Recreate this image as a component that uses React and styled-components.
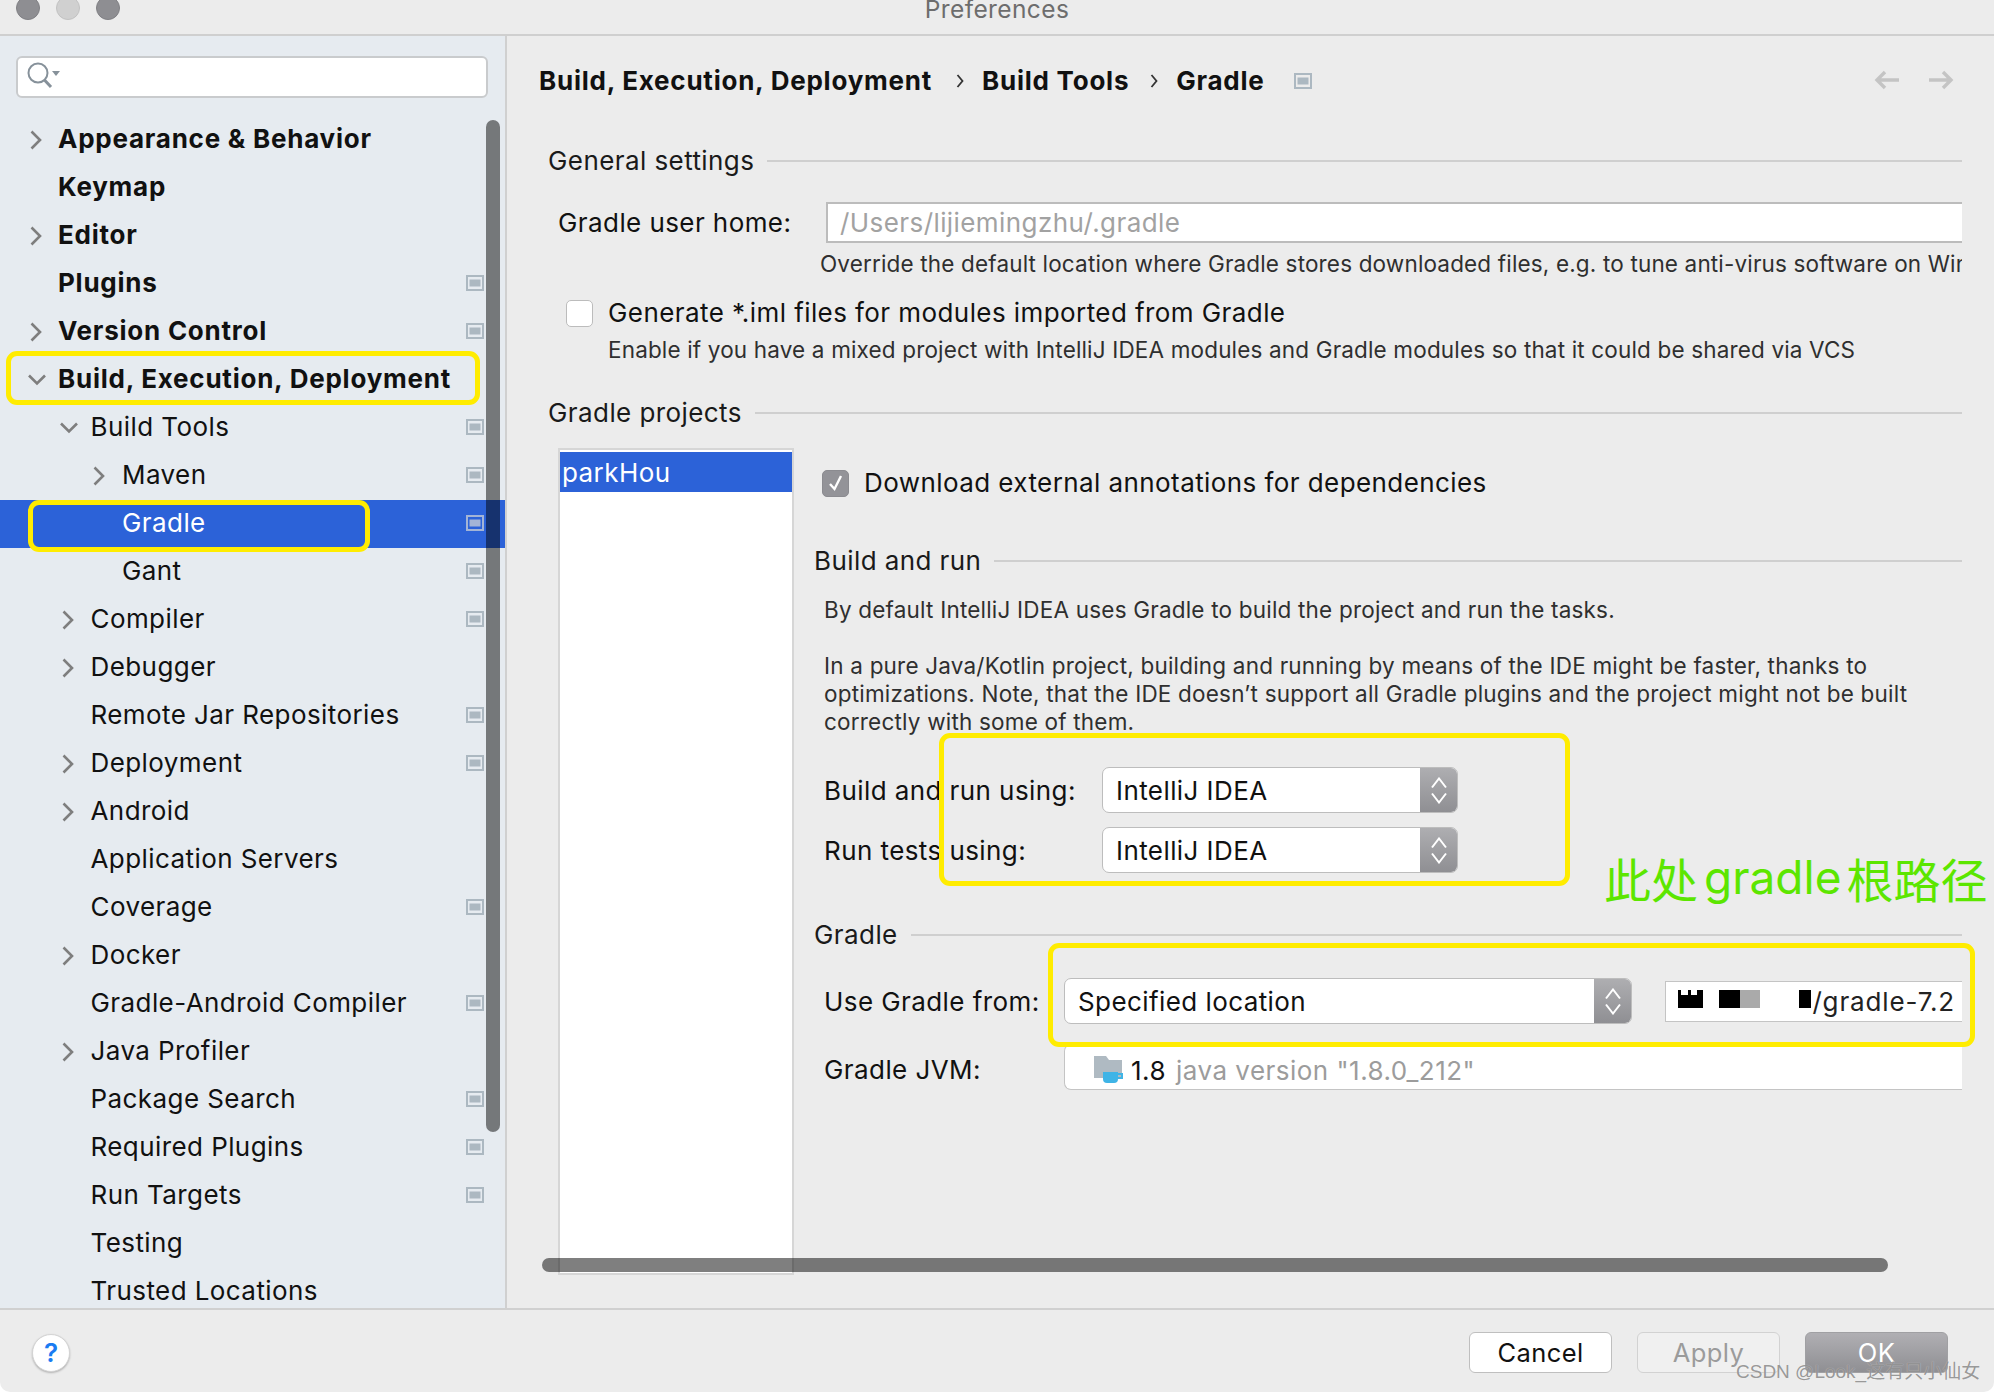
import React from "react";
import styled, { createGlobalStyle } from "styled-components";

const Global = createGlobalStyle`
  html, body { margin: 0; padding: 0; background: #fff; }
  * { box-sizing: border-box; }
  body { font-family: Inter, "Noto Sans", "Liberation Sans", sans-serif; color: #111; }
`;

const Window = styled.div`
  position: relative;
  width: 1994px;
  height: 1392px;
  display: flex;
  flex-direction: column;
  background: #ececec;
  overflow: hidden;
  border-radius: 0 0 10px 10px;
`;

const TitleBar = styled.header`
  height: 36px;
  flex: none;
  display: grid;
  grid-template-columns: 1fr auto 1fr;
  border-bottom: 2px solid #cfcfcf;
  overflow: hidden;
`;
const Lights = styled.div`
  display: flex;
  gap: 16px;
  padding-left: 16px;
  margin-top: -4px;
`;
const Light = styled.span`
  width: 24px;
  height: 24px;
  border-radius: 50%;
  background: ${(p) => (p.$dim ? "#d0d0d0" : "#8e8e92")};
  border: 1px solid ${(p) => (p.$dim ? "#c2c2c2" : "#808084")};
`;
const Title = styled.div`
  font-size: 24.5px;
  line-height: 24px;
  margin-top: -3px;
  color: #6d6d6d;
  letter-spacing: 0.4px;
`;

const Body = styled.div`
  flex: 1;
  display: flex;
  min-height: 0;
`;

const Sidebar = styled.aside`
  position: relative;
  width: 507px;
  flex: none;
  background: #e6ebf0;
  border-right: 2px solid #d0d0d0;
  padding-top: 20px;
  overflow: hidden;
`;
const Search = styled.div`
  width: 472px;
  height: 42px;
  margin-left: 16px;
  background: #fff;
  border: 2px solid #c9cbcd;
  border-radius: 6px;
  display: flex;
  align-items: center;
  padding-left: 8px;
`;
const Tree = styled.div`
  margin-top: 18px;
`;
const Row = styled.div`
  height: 48px;
  display: flex;
  align-items: center;
  padding-left: ${(p) => 25 + p.$level * 31.5}px;
  padding-right: 21px;
  background: ${(p) => (p.$selected ? "#2c62d8" : "transparent")};
  color: ${(p) => (p.$selected ? "#fff" : "#111")};
`;
const Toggle = styled.span`
  width: 34px;
  flex: none;
  display: flex;
  align-items: center;
  padding-left: ${(p) => (p.$open ? 2 : 4)}px;
`;
const RowLabel = styled.span`
  font-size: 26px;
  line-height: 32px;
  margin-top: -3px;
  margin-left: ${(p) => (p.$bold ? "-1px" : "0")};
  font-weight: ${(p) => (p.$bold ? 700 : 400)};
  letter-spacing: ${(p) => (p.$bold ? "0.76px" : "0.42px")};
  white-space: nowrap;
`;
const Badge = styled.svg`
  margin-left: auto;
  margin-top: -2px;
  flex: none;
  display: block;
`;
const CrumbBadge = styled.svg`
  margin-left: 29px;
  flex: none;
  display: block;
`;
const Thumb = styled.div`
  position: absolute;
  left: 486px;
  top: 84px;
  width: 14px;
  height: 1012px;
  border-radius: 7px;
  background: rgba(0, 0, 0, 0.49);
`;

const Pane = styled.main`
  position: relative;
  flex: 1;
  min-width: 0;
  padding-right: 32px;
  display: flex;
  flex-direction: column;
`;
const Breadcrumb = styled.nav`
  height: 90px;
  flex: none;
  display: flex;
  align-items: center;
  padding-left: 32px;
`;
const Crumb = styled.span`
  font-size: 26px;
  font-weight: 700;
  letter-spacing: 0.76px;
  margin-top: -1px;
  color: #111;
  white-space: nowrap;
`;
const CrumbSep = styled.svg`
  margin: 0 18px 0 ${(p) => p.$left}px;
  flex: none;
`;
const NavArrows = styled.div`
  margin-left: auto;
  margin-right: 8px;
  display: flex;
  gap: 28px;
  margin-top: -3px;
`;
const Settings = styled.div`
  flex: 1;
  min-height: 0;
  padding: 20px 0 0 41px;
  overflow: hidden;
`;
const SectionHead = styled.div`
  height: 30px;
  display: flex;
  align-items: center;
  gap: 13px;
  margin-top: ${(p) => p.$top || 0}px;
`;
const SectionTitle = styled.span`
  font-size: 26px;
  letter-spacing: 0.42px;
  white-space: nowrap;
  margin-top: -1px;
  color: #1a1a1a;
`;
const SectionRule = styled.span`
  flex: 1;
  height: 2px;
  background: #cfcfcf;
`;
const HomeRow = styled.div`
  display: flex;
  align-items: center;
  margin-top: 26px;
  padding-left: 10px;
`;
const FormLabel = styled.span`
  width: ${(p) => p.$w}px;
  flex: none;
  font-size: 26px;
  letter-spacing: 0.42px;
  white-space: nowrap;
  color: #111;
  margin-top: ${(p) => p.$nudge || 0}px;
`;
const PathInput = styled.div`
  flex: 1;
  min-width: 0;
  height: 41px;
  background: #fff;
  border: 2px solid #bcbcbc;
  border-right: 0;
  display: flex;
  align-items: center;
  padding-left: 12px;
  font-size: 26px;
  letter-spacing: 0.42px;
  color: #a2a2a2;
`;
const Hint = styled.div`
  font-size: 22.5px;
  line-height: 28px;
  letter-spacing: 0.16px;
  color: #2f2f2f;
  white-space: nowrap;
  margin-top: ${(p) => p.$top || 0}px;
  margin-left: ${(p) => p.$left || 0}px;
`;
const CheckRow = styled.label`
  display: flex;
  align-items: center;
  height: 30px;
  gap: 15px;
  margin-top: ${(p) => p.$top || 0}px;
  margin-left: ${(p) => p.$left || 0}px;
  font-size: 26px;
  letter-spacing: 0.42px;
  color: #111;
  white-space: nowrap;
`;
const CheckText = styled.span`
  margin-top: -1px;
`;
const Box = styled.span`
  width: 27px;
  height: 27px;
  flex: none;
  border-radius: 5px;
  background: ${(p) => (p.$on ? "#939398" : "#fff")};
  border: 1px solid ${(p) => (p.$on ? "#8b8b90" : "#bcbcbc")};
  display: flex;
  align-items: center;
  justify-content: center;
`;
const Projects = styled.div`
  display: flex;
  margin: 20px 0 0 10px;
  height: 827px;
`;
const ProjectList = styled.div`
  width: 236px;
  flex: none;
  background: #fff;
  border: 2px solid #d6d6d6;
  padding-top: 2px;
`;
const ProjectItem = styled.div`
  height: 40px;
  background: #2c62d8;
  color: #fff;
  font-size: 26px;
  letter-spacing: 0.42px;
  line-height: 41px;
  padding-left: 2px;
`;
const Detail = styled.div`
  flex: 1;
  min-width: 0;
  padding: 20px 0 0 20px;
`;
const Para = styled.div`
  font-size: 22.5px;
  line-height: 28px;
  letter-spacing: 0.2px;
  color: #2f2f2f;
  margin: ${(p) => p.$top || 0}px 0 0 10px;
  white-space: pre-line;
`;
const FormRow = styled.div`
  display: flex;
  align-items: center;
  padding-left: 10px;
  margin-top: ${(p) => p.$top}px;
`;
const Select = styled.div`
  width: ${(p) => p.$w}px;
  height: 46px;
  flex: none;
  display: flex;
  background: #fff;
  border: 1px solid #bdbdbd;
  border-radius: 7px;
  overflow: hidden;
  font-size: 26px;
  letter-spacing: 0.42px;
  color: #111;
`;
const SelectText = styled.span`
  flex: 1;
  display: flex;
  align-items: center;
  padding: 1px 0 0 13px;
`;
const Stepper = styled.span`
  width: 37px;
  flex: none;
  display: flex;
  align-items: center;
  justify-content: center;
  background: linear-gradient(#aeaeb1, #8f8f93);
`;
const LocationField = styled.div`
  flex: 1;
  min-width: 0;
  height: 41px;
  margin: 0 0 0 33px;
  background: #fff;
  border: 1px solid #c4c4c4;
  border-right: 0;
  display: flex;
  align-items: center;
  justify-content: flex-end;
  padding-right: 7px;
  font-size: 26px;
  letter-spacing: 0.85px;
  color: #222;
`;
const RedactWrap = styled.span`
  position: relative;
  flex: 1;
  align-self: stretch;
`;
const Redact = styled.span`
  position: absolute;
  top: ${(p) => p.$y}px;
  height: ${(p) => p.$h}px;
  left: ${(p) => p.$x}px;
  width: ${(p) => p.$w}px;
  background: ${(p) => p.$c};
`;
const JvmField = styled.div`
  flex: 1;
  min-width: 0;
  height: 46px;
  background: #fff;
  border: 1px solid #c4c4c4;
  border-right: 0;
  border-radius: 7px 0 0 7px;
  display: flex;
  align-items: center;
  padding: 6px 0 0 29px;
  gap: 7px;
  font-size: 26px;
  letter-spacing: 0.48px;
  color: #111;
`;
const Muted = styled.span`
  color: #9c9c9c;
  margin-left: 3px;
`;
const HScroll = styled.div`
  position: absolute;
  left: 35px;
  top: 1222px;
  width: 1346px;
  height: 14px;
  border-radius: 7px;
  background: rgba(0, 0, 0, 0.5);
`;

const Footer = styled.footer`
  height: 84px;
  flex: none;
  border-top: 2px solid #d0d0d0;
  display: flex;
  align-items: center;
  gap: 25px;
  padding: 3px 46px 0 32px;
`;
const Help = styled.span`
  width: 38px;
  height: 38px;
  border-radius: 50%;
  background: #fff;
  border: 1px solid #d4d4d4;
  box-shadow: 0 1px 2px rgba(0, 0, 0, 0.25);
  margin-right: auto;
  color: #1a7cf2;
  font-size: 26px;
  font-weight: 600;
  display: flex;
  align-items: center;
  justify-content: center;
`;
const Button = styled.button`
  width: 143px;
  height: 41px;
  padding: 0;
  font-family: inherit;
  font-size: 25.5px;
  letter-spacing: 0.4px;
  border-radius: 6px;
  border: 1px solid ${(p) => (p.$kind === "apply" ? "#d2d2d2" : p.$kind === "ok" ? "#a0a0a3" : "#bfbfbf")};
  background: ${(p) =>
    p.$kind === "apply" ? "#f0f0f0" : p.$kind === "ok" ? "linear-gradient(#b0afb3, #8f8f93)" : "#fff"};
  color: ${(p) => (p.$kind === "apply" ? "#9b9b9b" : p.$kind === "ok" ? "#fff" : "#111")};
`;

const Highlight = styled.div`
  position: absolute;
  left: ${(p) => p.$x}px;
  top: ${(p) => p.$y}px;
  width: ${(p) => p.$w}px;
  height: ${(p) => p.$h}px;
  border: 5.5px solid #ffec00;
  border-radius: 11px;
  pointer-events: none;
`;
const Note = styled.div`
  position: absolute;
  left: 1604px;
  top: 843px;
  display: flex;
  align-items: center;
  height: 68px;
  font-family: "Noto Sans CJK SC", sans-serif;
  font-size: 47px;
  color: #5ce600;
  white-space: nowrap;
`;
const NoteLatin = styled.span`
  font-family: Inter, sans-serif;
  font-size: 46px;
  margin: 0 5px 0 6px;
`;
const Watermark = styled.div`
  position: absolute;
  left: 1736px;
  top: 1360px;
  font-family: "Liberation Sans", "Noto Sans CJK SC", sans-serif;
  font-size: 19px;
  line-height: 24px;
  color: rgba(140, 140, 140, 0.9);
  white-space: nowrap;
  text-shadow: 0 0 1px rgba(255, 255, 255, 0.5);
`;

const Chevron = ({ open, color = "#7e7e7e" }) =>
  open ? (
    <svg width="20" height="14" viewBox="0 0 20 14" fill="none">
      <path d="M2 2.5 L10 10.5 L18 2.5" stroke={color} strokeWidth="2.6" />
    </svg>
  ) : (
    <svg width="14" height="20" viewBox="0 0 14 20" fill="none">
      <path d="M2.5 1.5 L11 10 L2.5 18.5" stroke={color} strokeWidth="2.6" />
    </svg>
  );

const ProjectIcon = ({ selected }) => (
  <Badge width="18" height="16" viewBox="0 0 18 16">
    <rect x="1" y="1" width="16" height="14" fill="none" stroke={selected ? "#a3b4d6" : "#acb8c1"} strokeWidth="2" />
    <rect x="3.5" y="4.5" width="11" height="7" fill={selected ? "#a3b4d6" : "#acb8c1"} />
  </Badge>
);

const SearchIcon = () => (
  <svg width="36" height="30" viewBox="0 0 36 30" fill="none">
    <circle cx="12" cy="11" r="9.5" stroke="#86919a" strokeWidth="2" />
    <path d="M18.5 18 L25 25" stroke="#86919a" strokeWidth="3" />
    <path d="M26 9 H34 L30 14 Z" fill="#86919a" />
  </svg>
);

const Updown = () => (
  <svg width="18" height="27" viewBox="0 0 18 27" fill="none">
    <path d="M2 10.5 L9 1.5 L16 10.5" stroke="#fff" strokeWidth="2" />
    <path d="M2 16.5 L9 25.5 L16 16.5" stroke="#fff" strokeWidth="2" />
  </svg>
);

const Arrow = ({ flip }) => (
  <svg width="26" height="20" viewBox="0 0 26 20" fill="none" transform={flip ? "scale(-1 1)" : undefined}>
    <path d="M25 10 H3 M11 2 L3 10 L11 18" stroke="#c4c4c4" strokeWidth="3.4" />
  </svg>
);

const Sep = ({ left }) => (
  <CrumbSep $left={left} width="8" height="16" viewBox="0 0 8 16" fill="none">
    <path d="M1.5 2 L6.5 8 L1.5 14" stroke="#333" strokeWidth="1.8" />
  </CrumbSep>
);

const JdkIcon = () => (
  <svg width="30" height="28" viewBox="0 0 30 28">
    <path d="M0 0 H12 L15 4 H28 V22 H0 Z" fill="#afbac2" />
    <path d="M9 16 H24 V23 A4 4 0 0 1 20 27 H13 A4 4 0 0 1 9 23 Z" fill="#3fb4e6" />
    <path d="M24 18 H28 V22 H24" fill="none" stroke="#3fb4e6" strokeWidth="2" />
  </svg>
);

const rows = [
  ["Appearance & Behavior", 0, "c", 0, 1],
  ["Keymap", 0, "", 0, 1],
  ["Editor", 0, "c", 0, 1],
  ["Plugins", 0, "", 1, 1],
  ["Version Control", 0, "c", 1, 1],
  ["Build, Execution, Deployment", 0, "o", 0, 1],
  ["Build Tools", 1, "o", 1, 0],
  ["Maven", 2, "c", 1, 0],
  ["Gradle", 2, "", 1, 0, 1],
  ["Gant", 2, "", 1, 0],
  ["Compiler", 1, "c", 1, 0],
  ["Debugger", 1, "c", 0, 0],
  ["Remote Jar Repositories", 1, "", 1, 0],
  ["Deployment", 1, "c", 1, 0],
  ["Android", 1, "c", 0, 0],
  ["Application Servers", 1, "", 0, 0],
  ["Coverage", 1, "", 1, 0],
  ["Docker", 1, "c", 0, 0],
  ["Gradle-Android Compiler", 1, "", 1, 0],
  ["Java Profiler", 1, "c", 0, 0],
  ["Package Search", 1, "", 1, 0],
  ["Required Plugins", 1, "", 1, 0],
  ["Run Targets", 1, "", 1, 0],
  ["Testing", 1, "", 0, 0],
  ["Trusted Locations", 1, "", 0, 0],
];

export default function App() {
  return (
    <>
      <Global />
      <Window>
        <TitleBar>
          <Lights>
            <Light />
            <Light $dim />
            <Light />
          </Lights>
          <Title>Preferences</Title>
          <span />
        </TitleBar>
        <Body>
          <Sidebar>
            <Search>
              <SearchIcon />
            </Search>
            <Tree>
              {rows.map(([label, level, toggle, badge, bold, selected]) => (
                <Row key={label} $level={level} $selected={selected}>
                  <Toggle $open={toggle === "o"}>{toggle && <Chevron open={toggle === "o"} />}</Toggle>
                  <RowLabel $bold={bold}>{label}</RowLabel>
                  {badge ? <ProjectIcon selected={selected} /> : null}
                </Row>
              ))}
            </Tree>
            <Thumb />
          </Sidebar>
          <Pane>
            <Breadcrumb>
              <Crumb>Build, Execution, Deployment</Crumb>
              <Sep left={24} />
              <Crumb>Build Tools</Crumb>
              <Sep left={21} />
              <Crumb>Gradle</Crumb>
              <CrumbBadge width="18" height="16" viewBox="0 0 18 16">
                <rect x="1" y="1" width="16" height="14" fill="none" stroke="#acb8c1" strokeWidth="2" />
                <rect x="3.5" y="4.5" width="11" height="7" fill="#acb8c1" />
              </CrumbBadge>
              <NavArrows>
                <Arrow />
                <Arrow flip />
              </NavArrows>
            </Breadcrumb>
            <Settings>
              <SectionHead>
                <SectionTitle>General settings</SectionTitle>
                <SectionRule />
              </SectionHead>
              <HomeRow>
                <FormLabel $w={268}>Gradle user home:</FormLabel>
                <PathInput>/Users/lijiemingzhu/.gradle</PathInput>
              </HomeRow>
              <Hint $top={7} $left={272}>
                Override the default location where Gradle stores downloaded files, e.g. to tune anti-virus software on Windows
              </Hint>
              <CheckRow $top={20} $left={18}>
                <Box />
                <CheckText>Generate *.iml files for modules imported from Gradle</CheckText>
              </CheckRow>
              <Hint $top={8} $left={60}>
                Enable if you have a mixed project with IntelliJ IDEA modules and Gradle modules so that it could be shared via VCS
              </Hint>
              <SectionHead $top={34}>
                <SectionTitle>Gradle projects</SectionTitle>
                <SectionRule />
              </SectionHead>
              <Projects>
                <ProjectList>
                  <ProjectItem>parkHou</ProjectItem>
                </ProjectList>
                <Detail>
                  <CheckRow $left={8}>
                    <Box $on>
                      <svg width="16" height="18" viewBox="0 0 16 18" fill="none">
                        <path d="M2 10 L6.5 15 L13 2" stroke="#fff" strokeWidth="2.4" />
                      </svg>
                    </Box>
                    <CheckText>Download external annotations for dependencies</CheckText>
                  </CheckRow>
                  <SectionHead $top={48}>
                    <SectionTitle>Build and run</SectionTitle>
                    <SectionRule />
                  </SectionHead>
                  <Para $top={20}>
                    {"By default IntelliJ IDEA uses Gradle to build the project and run the tasks.\n\nIn a pure Java/Kotlin project, building and running by means of the IDE might be faster, thanks to\noptimizations. Note, that the IDE doesn’t support all Gradle plugins and the project might not be built\ncorrectly with some of them."}
                  </Para>
                  <FormRow $top={31}>
                    <FormLabel $w={278} $nudge={1}>Build and run using:</FormLabel>
                    <Select $w={356}>
                      <SelectText>IntelliJ IDEA</SelectText>
                      <Stepper>
                        <Updown />
                      </Stepper>
                    </Select>
                  </FormRow>
                  <FormRow $top={14}>
                    <FormLabel $w={278} $nudge={1}>Run tests using:</FormLabel>
                    <Select $w={356}>
                      <SelectText>IntelliJ IDEA</SelectText>
                      <Stepper>
                        <Updown />
                      </Stepper>
                    </Select>
                  </FormRow>
                  <SectionHead $top={47}>
                    <SectionTitle>Gradle</SectionTitle>
                    <SectionRule />
                  </SectionHead>
                  <FormRow $top={28}>
                    <FormLabel $w={240} $nudge={1}>Use Gradle from:</FormLabel>
                    <Select $w={568}>
                      <SelectText>Specified location</SelectText>
                      <Stepper>
                        <Updown />
                      </Stepper>
                    </Select>
                    <LocationField>
                      <RedactWrap>
                        <Redact $x={12} $y={13} $w={25} $h={13} $c="#000" />
                        <Redact $x={12} $y={8} $w={3} $h={5} $c="#000" />
                        <Redact $x={22} $y={8} $w={3} $h={5} $c="#000" />
                        <Redact $x={31} $y={8} $w={6} $h={5} $c="#000" />
                        <Redact $x={53} $y={8} $w={21} $h={18} $c="#000" />
                        <Redact $x={74} $y={8} $w={20} $h={18} $c="#aaa" />
                        <Redact $x={133} $y={8} $w={12} $h={18} $c="#000" />
                      </RedactWrap>
                      /gradle-7.2
                    </LocationField>
                  </FormRow>
                  <FormRow $top={20}>
                    <FormLabel $w={240} $nudge={5}>Gradle JVM:</FormLabel>
                    <JvmField>
                      <JdkIcon />
                      1.8
                      <Muted>java version "1.8.0_212"</Muted>
                    </JvmField>
                  </FormRow>
                </Detail>
              </Projects>
            </Settings>
            <HScroll />
          </Pane>
        </Body>
        <Footer>
          <Help>?</Help>
          <Button>Cancel</Button>
          <Button $kind="apply">Apply</Button>
          <Button $kind="ok">OK</Button>
        </Footer>
        <Highlight $x={6} $y={351} $w={474} $h={54} />
        <Highlight $x={28} $y={500} $w={342} $h={52} />
        <Highlight $x={939} $y={733} $w={631} $h={153} />
        <Highlight $x={1048} $y={943} $w={927} $h={104} />
        <Note>
          此处<NoteLatin>gradle</NoteLatin>根路径
        </Note>
        <Watermark>CSDN @Look_这有只小仙女</Watermark>
      </Window>
    </>
  );
}
